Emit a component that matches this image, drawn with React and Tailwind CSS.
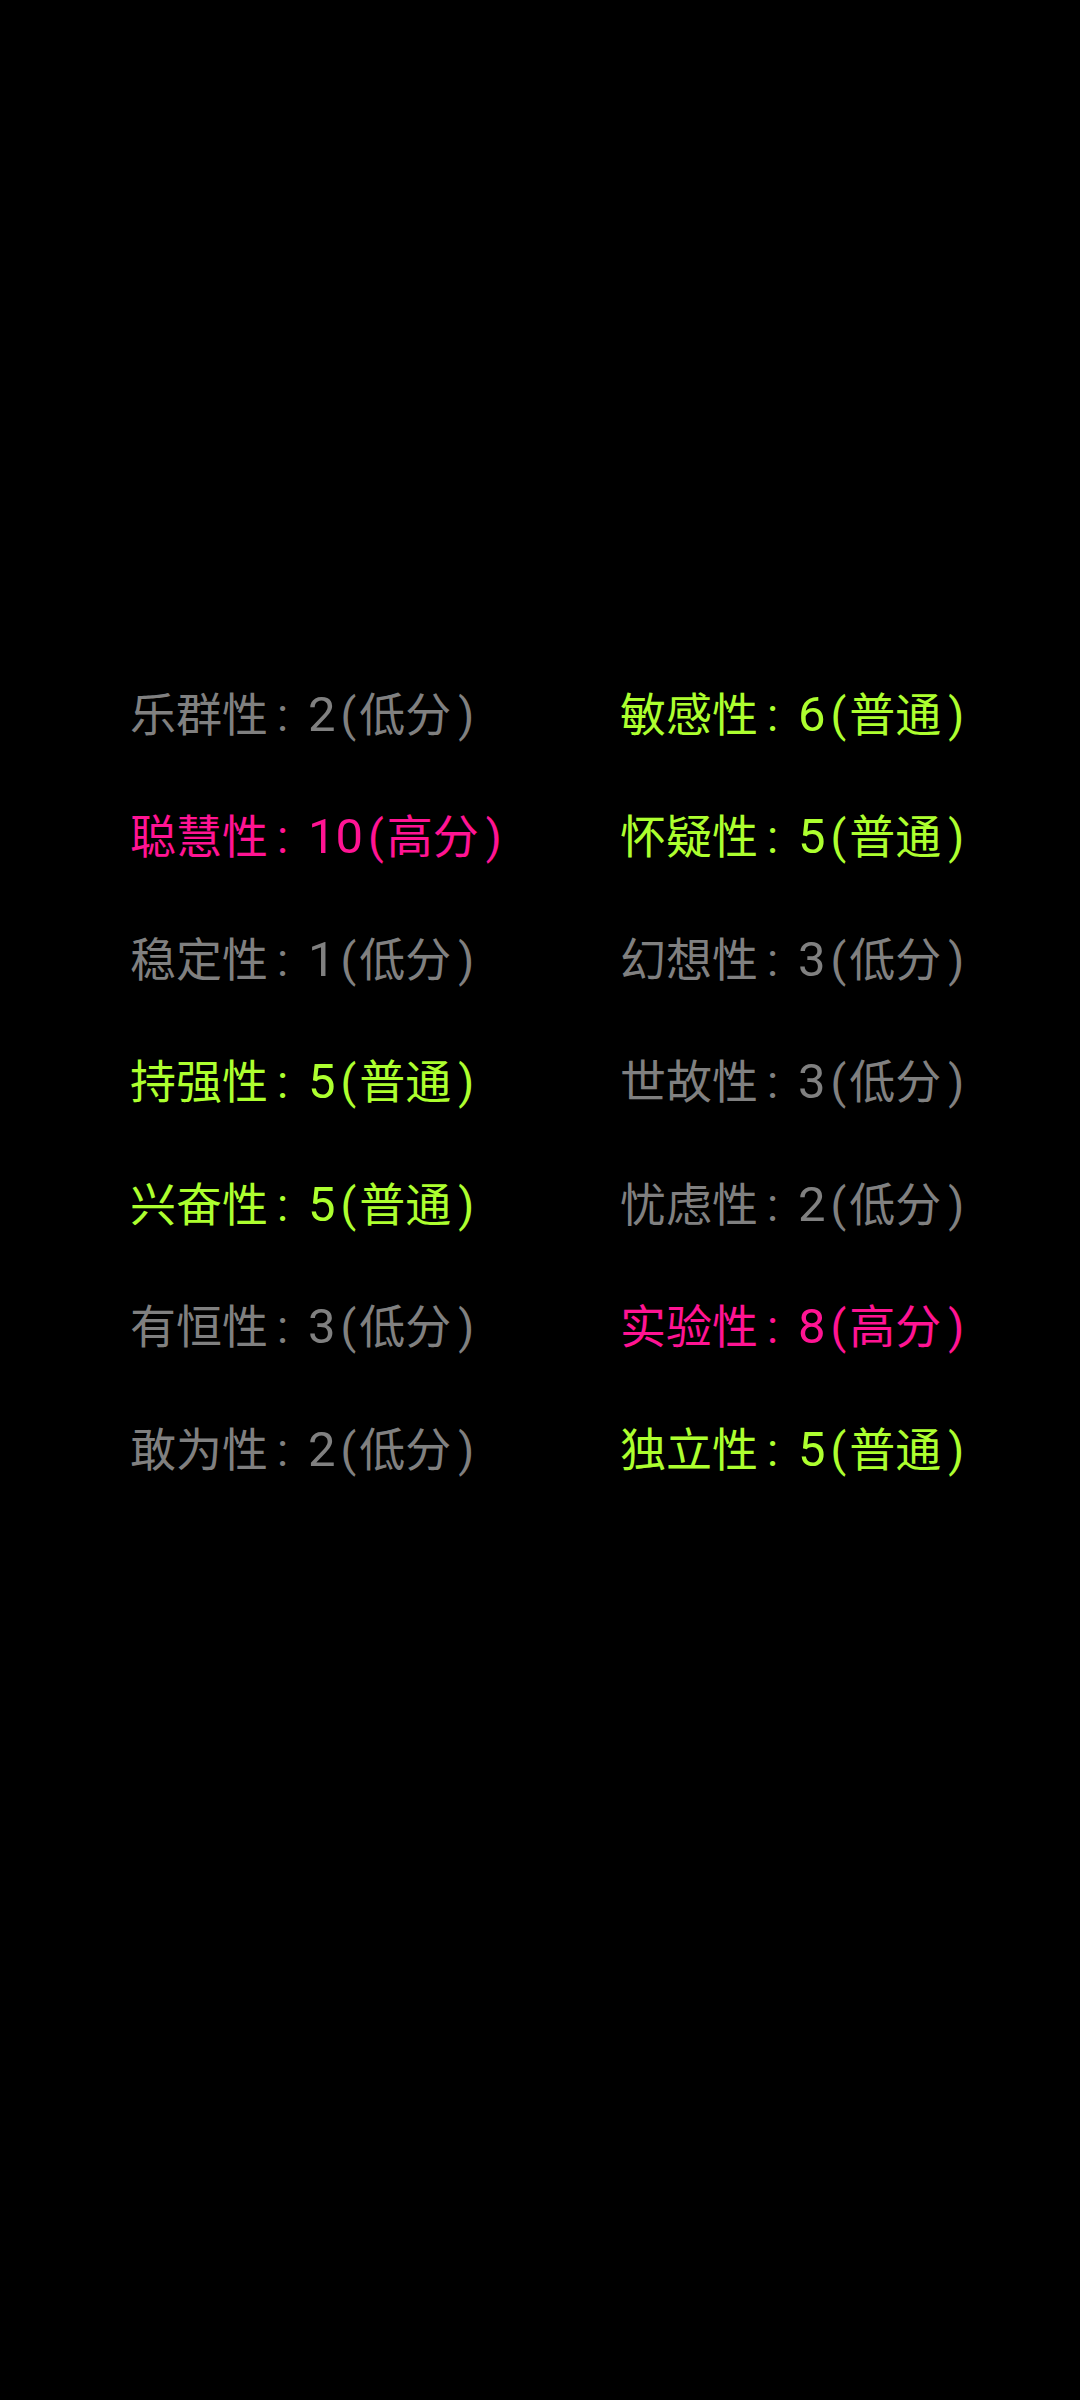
import React from "react";

const GRAY = "text-[#808080]";
const GREEN = "text-[#adff2f]";
const PINK = "text-[#ff1493]";

// left column / right column, row by row
const rows = [
  [["乐群性", "2", "低分"], ["敏感性", "6", "普通"]],
  [["聪慧性", "10", "高分"], ["怀疑性", "5", "普通"]],
  [["稳定性", "1", "低分"], ["幻想性", "3", "低分"]],
  [["持强性", "5", "普通"], ["世故性", "3", "低分"]],
  [["兴奋性", "5", "普通"], ["忧虑性", "2", "低分"]],
  [["有恒性", "3", "低分"], ["实验性", "8", "高分"]],
  [["敢为性", "2", "低分"], ["独立性", "5", "普通"]],
];

const colorFor = (level) => {
  if (level === "高分") return PINK;
  if (level === "普通") return GREEN;
  return GRAY;
};

function Trait({ name, score, level }) {
  return (
    <div className={`h-[122.5px] flex items-center whitespace-nowrap ${colorFor(level)}`}>
      <p>
        {name}
        <span className="inline-block w-[40px] pl-[9px] font-[Roboto,sans-serif]">:</span>
        <span className="text-[49px] font-[Roboto,sans-serif]">{score}</span>
        <span className="ml-[5px] mr-[3px] font-[Roboto,sans-serif]">(</span>
        {level}
        <span className="ml-[7px] font-[Roboto,sans-serif]">)</span>
      </p>
    </div>
  );
}

export default function App() {
  return (
    <div className="min-h-[2400px] w-[1080px] bg-black pt-[652px] pl-[130px] text-[46px] leading-none font-['Noto_Sans_CJK_SC','Noto_Sans',sans-serif]">
      <div className="grid grid-cols-[490px_1fr]">
        {rows.map((pair, i) => (
          <React.Fragment key={i}>
            {pair.map(([name, score, level]) => (
              <Trait key={name} name={name} score={score} level={level} />
            ))}
          </React.Fragment>
        ))}
      </div>
    </div>
  );
}
